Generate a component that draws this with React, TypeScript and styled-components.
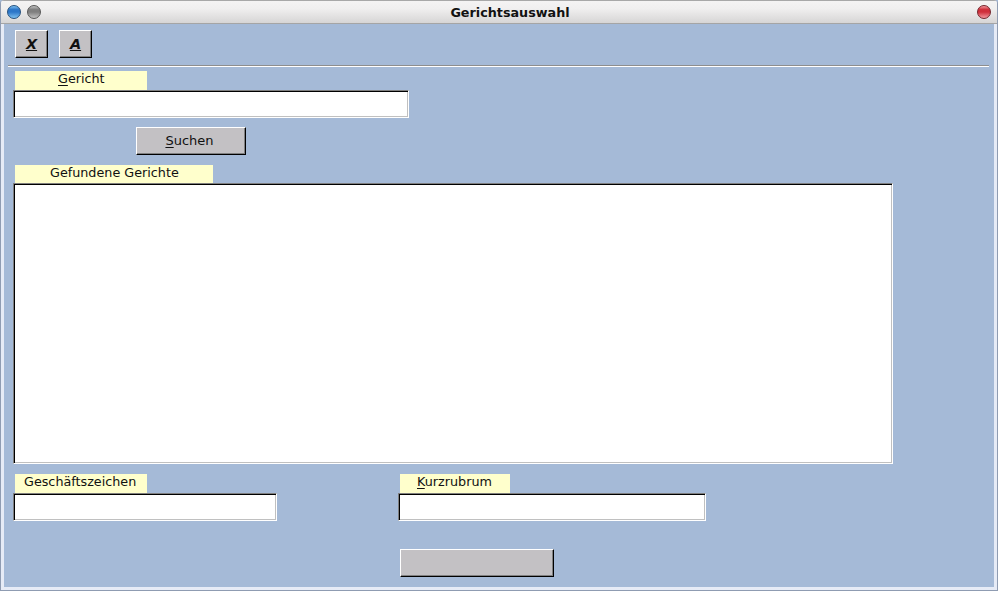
import React from 'react';
import styled, { createGlobalStyle } from 'styled-components';

const GlobalStyle = createGlobalStyle`
  html, body {
    margin: 0;
    padding: 0;
    background: #a5bad7;
  }
  body {
    font-family: "DejaVu Sans", sans-serif;
    font-size: 12.75px;
    color: #111;
  }
`;

const Window = styled.div`
  width: 998px;
  height: 591px;
  box-sizing: border-box;
  display: flex;
  flex-direction: column;
  overflow: hidden;
  background: #e6ebf6;
  border: solid #8f9cb2;
  border-width: 0 1px 1px 1px;
  border-radius: 4px 4px 0 0;
`;

const TitleBar = styled.div`
  height: 24px;
  flex: none;
  box-sizing: border-box;
  margin: 0 -1px;
  padding: 0 7px;
  display: flex;
  align-items: center;
  gap: 6px;
  background: linear-gradient(#f4f3f3, #f0efef 35%, #d6d5d5);
  border-top: 1px solid #a8a8a8;
  border-bottom: 1px solid #a5a5a5;
`;

const Title = styled.div`
  flex: 1;
  padding-left: 2px;
  text-align: center;
  font-weight: bold;
  color: #111;
`;

const Light = styled.span<{ $hue: string; $dark: string; $shine: string }>`
  display: block;
  flex: none;
  width: 14px;
  height: 14px;
  box-sizing: border-box;
  border-radius: 50%;
  border: 1px solid ${(p) => p.$dark};
  background: linear-gradient(
    ${(p) => p.$shine} 0%,
    ${(p) => p.$hue} 30%,
    ${(p) => p.$hue} 50%,
    ${(p) => p.$shine} 100%
  );
`;

const Body = styled.div`
  flex: 1;
  margin: 0 3px 3px 3px;
  background: #a5bad7;
  padding-left: 11px;
  display: flex;
  flex-direction: column;
  align-items: flex-start;
`;

const Toolbar = styled.div`
  display: flex;
  gap: 11px;
  padding-top: 6px;
`;

const RaisedButton = styled.button<{ $width: number }>`
  width: ${(p) => p.$width}px;
  height: 28px;
  box-sizing: border-box;
  padding: 0;
  background: #c3c1c4;
  border: 1px solid;
  border-color: #fff #000 #000 #fff;
  box-shadow: inset -1px -1px 0 #808080;
  font-family: "DejaVu Sans", sans-serif;
  font-size: 12.75px;
  color: #111;
`;

const ToolButton = styled(RaisedButton)`
  font-weight: bold;
  font-style: italic;
  font-size: 14.5px;
  text-decoration: underline;
  padding-bottom: 1px;
`;

const Separator = styled.hr`
  width: 981px;
  height: 2px;
  box-sizing: border-box;
  margin: 7px 0 4px -7px;
  border: 0;
  border-top: 1px solid #8e8e8e;
  border-bottom: 1px solid #fff;
`;

const Field = styled.div`
  display: flex;
  flex-direction: column;
  align-items: flex-start;
`;

const Label = styled.label<{ $width: number; $indent: number }>`
  width: ${(p) => p.$width}px;
  height: 19px;
  box-sizing: border-box;
  padding-left: ${(p) => p.$indent}px;
  background: #ffffcc;
  line-height: 16px;
  white-space: nowrap;
  color: #111;
  u {
    text-underline-offset: 2px;
  }
`;

const Sunken = `
  display: block;
  box-sizing: border-box;
  margin-left: -2px;
  background: #fff;
  border: 1px solid;
  border-color: #7f7f7f #fff #fff #7f7f7f;
  box-shadow: inset 1px 1px 0 #000, inset -1px -1px 0 #c0c0c0;
`;

const TextInput = styled.input<{ $width: number }>`
  ${Sunken}
  width: ${(p) => p.$width}px;
  height: 28px;
  padding: 0;
  outline: none;
`;

const ResultList = styled.div`
  ${Sunken}
  width: 880px;
  height: 281px;
  margin-top: -1px;
`;

const SearchButton = styled(RaisedButton)`
  margin: 9px 0 10px 121px;
  padding: 0 3px 2px 0;
  font-size: 13px;
  u {
    text-underline-offset: 2px;
  }
`;

const BottomRow = styled.div`
  display: flex;
  gap: 123px;
  margin-top: 10px;
`;

const SubmitButton = styled(RaisedButton)`
  margin-top: 28px;
`;

export default function App() {
  return (
    <Window>
      <GlobalStyle />
      <TitleBar>
        <Light $hue="#2c76c8" $dark="#24507f" $shine="#7cc0f0" />
        <Light $hue="#7f7f7f" $dark="#565656" $shine="#c2c2c2" />
        <Title>Gerichtsauswahl</Title>
        <Light $hue="#cf2f3a" $dark="#74232a" $shine="#f2989e" />
      </TitleBar>
      <Body>
        <Toolbar>
          <ToolButton $width={33}>X</ToolButton>
          <ToolButton $width={33}>A</ToolButton>
        </Toolbar>
        <Separator />
        <Field>
          <Label $width={132} $indent={43}>
            <u>G</u>ericht
          </Label>
          <TextInput $width={396} />
        </Field>
        <SearchButton $width={110}>
          <u>S</u>uchen
        </SearchButton>
        <Field>
          <Label $width={198} $indent={35}>
            Gefundene Gerichte
          </Label>
          <ResultList />
        </Field>
        <BottomRow>
          <Field>
            <Label $width={132} $indent={9}>
              Geschäftszeichen
            </Label>
            <TextInput $width={264} />
          </Field>
          <Field>
            <Label $width={110} $indent={17}>
              <u>K</u>urzrubrum
            </Label>
            <TextInput $width={308} />
            <SubmitButton $width={154} />
          </Field>
        </BottomRow>
      </Body>
    </Window>
  );
}
